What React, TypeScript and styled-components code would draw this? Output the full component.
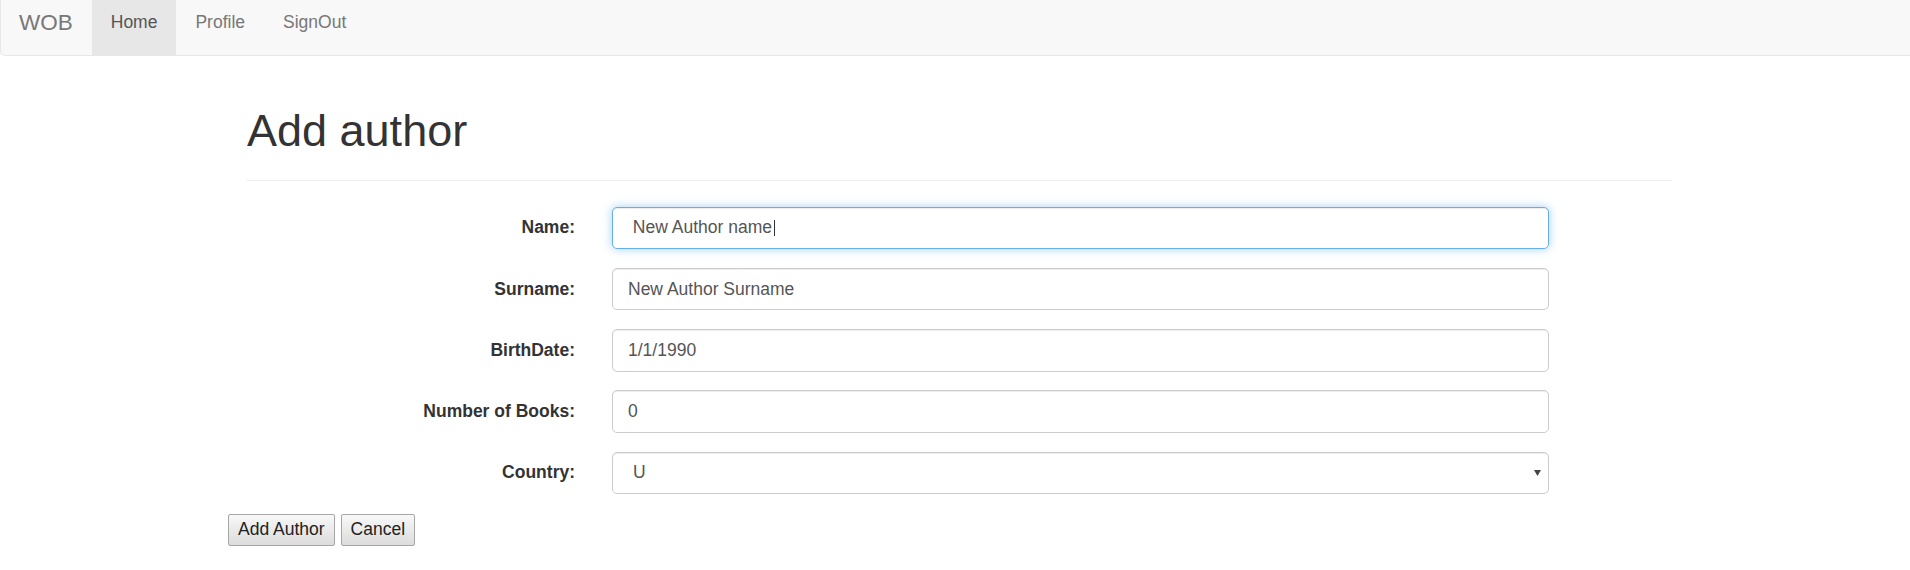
import React from "react";
import styled, { createGlobalStyle } from "styled-components";

const GlobalStyle = createGlobalStyle`
  html, body { margin: 0; padding: 0; background: #fff; }
  body {
    font-family: "Liberation Sans", Arial, Helvetica, sans-serif;
    font-size: 17.5px;
    line-height: 1.42857;
    color: #333;
  }
  * { box-sizing: border-box; }
`;

const Navbar = styled.nav`
  display: flex;
  height: 56px;
  background: #f8f8f8;
  border-left: 1px solid #e7e7e7;
  border-bottom: 1px solid #e7e7e7;
  border-bottom-left-radius: 5px;
`;

const NavItem = styled.a<{ $active?: boolean; $brand?: boolean }>`
  display: flex;
  align-items: center;
  padding: 0 19px 9px ${(p) => (p.$brand ? "18px" : "19px")};
  font-size: ${(p) => (p.$brand ? "22.5px" : "17.5px")};
  line-height: 1;
  color: ${(p) => (p.$active ? "#555" : "#777")};
  background: ${(p) => (p.$active ? "#e7e7e7" : "transparent")};
  text-decoration: none;
  cursor: pointer;
`;

const Page = styled.main`
  width: 1463px;
  margin-left: 228px;
`;

const PageHeader = styled.div`
  margin: 0 19px;
  padding-bottom: 11px;
  border-bottom: 1px solid #eee;
`;

const Title = styled.h1`
  margin: 50px 0 13px;
  font-size: 45px;
  font-weight: 500;
  line-height: 1.1;
  color: #333;
`;

const Form = styled.form`
  display: flex;
  flex-direction: column;
  gap: 18.75px;
  margin-top: 26px;
`;

const Row = styled.div`
  display: grid;
  grid-template-columns: 347px 937px;
  column-gap: 37px;
  align-items: center;
`;

const Label = styled.label`
  text-align: right;
  font-weight: 700;
  color: #333;
`;

const Field = styled.div<{ $focused?: boolean; $select?: boolean }>`
  height: 42.5px;
  display: flex;
  align-items: center;
  justify-content: space-between;
  padding: 0 ${(p) => (p.$select ? "7px" : "15px")} 0
    ${(p) => (p.$select ? "20px" : "15px")};
  border: 1px solid ${(p) => (p.$focused ? "#66afe9" : "#ccc")};
  border-radius: 5px;
  background: #fff;
  color: #555;
  white-space: pre;
  box-shadow: ${(p) =>
    p.$focused
      ? "inset 0 1px 1px rgba(0,0,0,.075), 0 0 10px rgba(102,175,233,.6)"
      : "inset 0 1px 1px rgba(0,0,0,.075)"};
`;

const FieldText = styled.span`
  display: flex;
  align-items: center;
`;

const Caret = styled.span`
  display: inline-block;
  width: 1px;
  height: 16px;
  margin-left: 2px;
  background: #333;
`;

const Actions = styled.div`
  display: flex;
  gap: 6px;
  margin-top: 1px;
`;

const Button = styled.button`
  height: 32px;
  padding: 0 9px;
  font-family: inherit;
  font-size: 17.5px;
  line-height: 1;
  color: #222;
  border: 1px solid #a6a6a6;
  border-radius: 2px;
  background: linear-gradient(#f8f8f8, #dcdcdc);
  cursor: pointer;
`;

const Arrow = () => (
  <svg width="7" height="6" viewBox="0 0 7 6">
    <path d="M0 0 L7 0 L3.5 6 Z" fill="#444" />
  </svg>
);

export default function App() {
  return (
    <>
      <GlobalStyle />
      <Navbar>
        <NavItem $brand>WOB</NavItem>
        <NavItem $active>Home</NavItem>
        <NavItem>Profile</NavItem>
        <NavItem>SignOut</NavItem>
      </Navbar>
      <Page>
        <PageHeader>
          <Title>Add author</Title>
        </PageHeader>
        <Form onSubmit={(e) => e.preventDefault()}>
          <Row>
            <Label>Name:</Label>
            <Field $focused>
              <FieldText>
                {" New Author name"}
                <Caret />
              </FieldText>
            </Field>
          </Row>
          <Row>
            <Label>Surname:</Label>
            <Field>New Author Surname</Field>
          </Row>
          <Row>
            <Label>BirthDate:</Label>
            <Field>1/1/1990</Field>
          </Row>
          <Row>
            <Label>Number of Books:</Label>
            <Field>0</Field>
          </Row>
          <Row>
            <Label>Country:</Label>
            <Field $select>
              <FieldText>U</FieldText>
              <Arrow />
            </Field>
          </Row>
          <Actions>
            <Button type="submit">Add Author</Button>
            <Button type="button">Cancel</Button>
          </Actions>
        </Form>
      </Page>
    </>
  );
}
